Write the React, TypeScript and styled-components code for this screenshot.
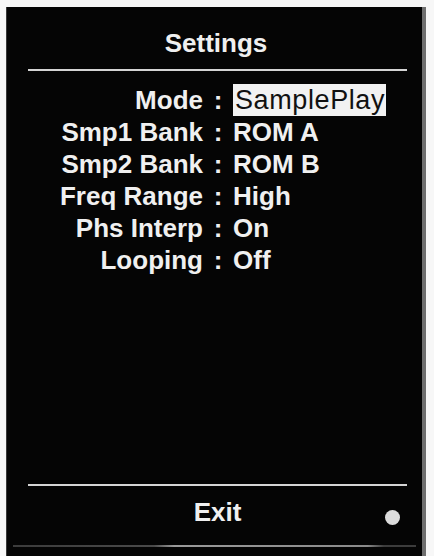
import React from "react";
import styled, { createGlobalStyle } from "styled-components";

const Global = createGlobalStyle`
  html, body {
    margin: 0;
    padding: 0;
    background: #f7f7f7;
  }
  body {
    width: 434px;
    height: 556px;
    overflow: hidden;
    font-family: "Liberation Sans", Arial, sans-serif;
  }
`;

const Screen = styled.div`
  box-sizing: border-box;
  margin: 7px 8px 0 6px;
  width: 420px;
  height: 549px;
  background: #050505;
  border-left: 1px solid #3a3a3a;
  border-right: 4px solid #6f6f6f;
  display: flex;
  flex-direction: column;
  padding-bottom: 9px;
  color: #f0f0f0;
  font-weight: 700;
  font-size: 26px;
`;

const Title = styled.div`
  padding: 21px 0 0 3px;
  line-height: 30px;
  height: 30px;
  text-align: center;
`;

const Divider = styled.div<{ $top: number; $bottom: number }>`
  height: 2px;
  background: #d4d4d4;
  margin: ${(p) => p.$top}px 15px ${(p) => p.$bottom}px 21px;
`;

const Rows = styled.div`
  flex: 1;
  display: grid;
  grid-template-columns: 196px 30px 1fr;
  grid-auto-rows: 32px;
  align-content: start;
  line-height: 32px;
`;

const Label = styled.div`
  text-align: right;
  white-space: nowrap;
`;

const Colon = styled.div`
  text-align: center;
`;

const Value = styled.div`
  white-space: nowrap;
`;

const Selected = styled.span`
  display: inline-block;
  height: 32px;
  padding: 0 1px 0 2px;
  background: #f2f2f2;
  color: #111;
  font-weight: 400;
  font-size: 27px;
  letter-spacing: 0.6px;
`;

const Footer = styled.div`
  display: grid;
  grid-template-columns: 1fr auto 1fr;
  height: 30px;
  line-height: 30px;
  padding: 0 22px 0 28px;
  margin-bottom: 18px;
`;

const Exit = styled.div`
  grid-column: 2;
`;

const Dot = styled.div`
  grid-column: 3;
  justify-self: end;
  align-self: start;
  width: 15px;
  height: 15px;
  margin: 13px 0 0 0;
  border-radius: 50%;
  background: #dcdcdc;
`;

const BottomEdge = styled.div`
  height: 2px;
  margin: 0 6px;
  background: linear-gradient(
    to right,
    #3c3c3c 0%,
    #4a4a4a 35%,
    #9a9a9a 40%,
    #8a8a8a 88%,
    #3c3c3c 92%,
    #3c3c3c 100%
  );
`;

const settings: { label: string; value: string; selected?: boolean }[] = [
  { label: "Mode", value: "SamplePlay", selected: true },
  { label: "Smp1 Bank", value: "ROM A" },
  { label: "Smp2 Bank", value: "ROM B" },
  { label: "Freq Range", value: "High" },
  { label: "Phs Interp", value: "On" },
  { label: "Looping", value: "Off" },
];

export default function App() {
  return (
    <>
      <Global />
      <Screen>
        <Title>Settings</Title>
        <Divider $top={11} $bottom={13} />
        <Rows>
          {settings.map((s) => (
            <React.Fragment key={s.label}>
              <Label>{s.label}</Label>
              <Colon>:</Colon>
              <Value>{s.selected ? <Selected>{s.value}</Selected> : s.value}</Value>
            </React.Fragment>
          ))}
        </Rows>
        <Divider $top={0} $bottom={11} />
        <Footer>
          <Exit>Exit</Exit>
          <Dot />
        </Footer>
        <BottomEdge />
      </Screen>
    </>
  );
}
